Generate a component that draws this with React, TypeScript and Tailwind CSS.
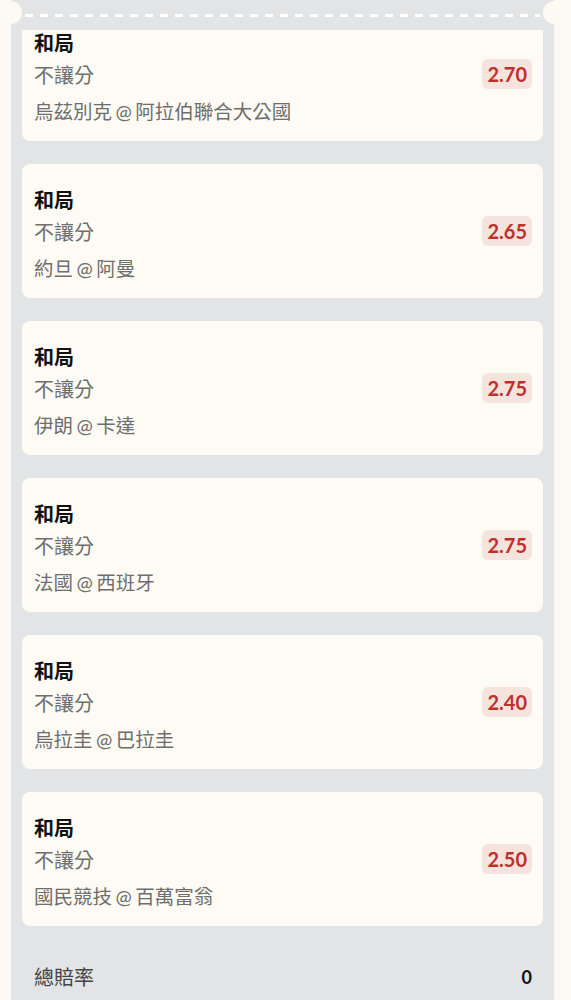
import React from 'react';

type Pick = {
  title: string;
  handicap: string;
  match: [string, string];
  odds: string;
};

const picks: Pick[] = [
  { title: '和局', handicap: '不讓分', match: ['烏茲別克', '阿拉伯聯合大公國'], odds: '2.70' },
  { title: '和局', handicap: '不讓分', match: ['約旦', '阿曼'], odds: '2.65' },
  { title: '和局', handicap: '不讓分', match: ['伊朗', '卡達'], odds: '2.75' },
  { title: '和局', handicap: '不讓分', match: ['法國', '西班牙'], odds: '2.75' },
  { title: '和局', handicap: '不讓分', match: ['烏拉圭', '巴拉圭'], odds: '2.40' },
  { title: '和局', handicap: '不讓分', match: ['國民競技', '百萬富翁'], odds: '2.50' },
];

function PickCard({ pick }: { pick: Pick }): React.ReactElement {
  return (
    <div className="flex h-[134px] items-center justify-between rounded-lg bg-[#fdfbf3] pl-3 pr-[11px]">
      <div className="flex flex-col self-start pt-[21px]">
        <p className="text-[20px] font-bold leading-[30px] text-[#111]">{pick.title}</p>
        <p className="mt-[2px] text-[20px] leading-[30px] text-[#6e6e6e]">{pick.handicap}</p>
        <p className="mt-[7px] text-[19.5px] leading-[30px] text-[#6e6e6e]">
          {pick.match[0]}
          <span className="mx-[3.5px]">@</span>
          {pick.match[1]}
        </p>
      </div>
      <span className="flex h-[30px] items-center rounded-md bg-[#f5e4dd] px-[5px] text-[20px] font-bold text-[#c0302b]">
        {pick.odds}
      </span>
    </div>
  );
}

export default function App(): React.ReactElement {
  return (
    <div
      className="h-[1000px] w-[571px] overflow-hidden bg-[#fcfaf2]"
      style={{ fontFamily: 'Lato, "Noto Sans CJK TC", sans-serif' }}
    >
      <div className="relative mx-[11px] w-[543px] bg-[#e3e4e6]">
        {/* ticket header with notches */}
        <div className="relative z-10 h-[30px] bg-[#e3e4e6]">
          <div className="absolute left-[-12px] top-[1px] h-[23px] w-[23px] rounded-full bg-[#fcfaf2]" />
          <div className="absolute right-[-12px] top-[1px] h-[23px] w-[23px] rounded-full bg-[#fcfaf2]" />
          <div className="absolute left-[14px] right-[14px] top-[14px] h-[3px] bg-[repeating-linear-gradient(90deg,#ffffff_0_8px,transparent_8px_15px)]" />
        </div>

        {/* scrolled list */}
        <div className="-mt-[23px] flex flex-col gap-[23px] px-[11px]">
          {picks.map((p, i) => (
            <PickCard key={i} pick={p} />
          ))}
        </div>

        <div className="flex items-center justify-between pl-[23px] pr-[22px] pt-[36px] pb-6">
          <span className="text-[20px] leading-[30px] text-[#444]">總賠率</span>
          <span className="text-[18px] font-bold text-[#111]">0</span>
        </div>
      </div>
    </div>
  );
}
